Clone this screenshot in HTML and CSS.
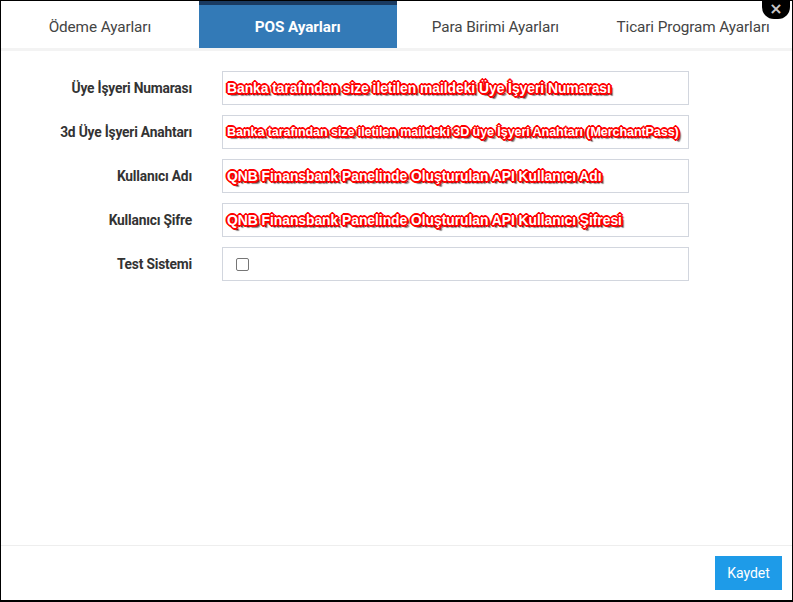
FILE: index.html
```html
<!DOCTYPE html>
<html lang="tr">
<head>
<meta charset="utf-8">
<title>POS Ayarları</title>
<link rel="stylesheet" href="styles.css">
</head>
<body>
<div class="frame">
  <div class="tabs">
    <div class="tab">Ödeme Ayarları</div>
    <div class="tab active">POS Ayarları</div>
    <div class="tab">Para Birimi Ayarları</div>
    <div class="tab">Ticari Program Ayarları</div>
  </div>
  <div class="close">×</div>
  <div class="content">
    <div class="row">
      <div class="label">Üye İşyeri Numarası</div>
      <div class="field"><span class="note">Banka tarafından size iletilen maildeki Üye İşyeri Numarası</span></div>
    </div>
    <div class="row">
      <div class="label">3d Üye İşyeri Anahtarı</div>
      <div class="field"><span class="note small">Banka tarafından size iletilen maildeki 3D üye İşyeri Anahtarı (MerchantPass)</span></div>
    </div>
    <div class="row">
      <div class="label">Kullanıcı Adı</div>
      <div class="field"><span class="note">QNB Finansbank Panelinde Oluşturulan API Kullanıcı Adı</span></div>
    </div>
    <div class="row">
      <div class="label">Kullanıcı Şifre</div>
      <div class="field"><span class="note">QNB Finansbank Panelinde Oluşturulan API Kullanıcı Şifresi</span></div>
    </div>
    <div class="row">
      <div class="label">Test Sistemi</div>
      <div class="field"><span class="check"></span></div>
    </div>
  </div>
  <div class="footer">
    <button class="save">Kaydet</button>
  </div>
</div>
</body>
</html>
```
FILE: styles.css
```css
* { box-sizing: border-box; }
html, body { margin: 0; padding: 0; background: #fff; }
body { font-family: Roboto, "Noto Sans", sans-serif; }
.frame {
  position: relative;
  width: 793px;
  height: 602px;
  border: 1px solid #000;
  border-bottom-width: 2px;
  display: flex;
  flex-direction: column;
  background: #fff;
}
.tabs {
  display: grid;
  grid-template-columns: repeat(4, 1fr);
  height: 50px;
  border-bottom: 3px solid #f3f3f3;
}
.tab {
  display: flex;
  align-items: center;
  justify-content: center;
  font-size: 15.3px;
  color: #444;
  padding-top: 5px;
  letter-spacing: -0.1px;
}
.tab.active {
  background: #337ab7;
  border-top: 4px solid #1a3a60;
  padding-top: 1px;
  color: #fff;
  font-weight: 700;
}
.close {
  position: absolute;
  top: 0;
  right: 2px;
  width: 28px;
  height: 18px;
  background: #000;
  border-radius: 0 0 12px 12px;
  color: #c8c8c8;
  font-weight: 700;
  font-size: 16px;
  line-height: 15px;
  text-align: center;
  font-family: "DejaVu Sans", sans-serif;
}
.content {
  flex: 1;
  padding-top: 20px;
  display: flex;
  flex-direction: column;
  gap: 10px;
}
.row {
  display: flex;
  align-items: center;
  gap: 30px;
}
.label {
  width: 191px;
  text-align: right;
  font-size: 13.8px;
  font-weight: 700;
  color: #333;
  letter-spacing: -0.2px;
}
.field {
  width: 467px;
  height: 34px;
  border: 1px solid #d2d6de;
  display: flex;
  align-items: center;
  padding-left: 4px;
}
.note {
  font-family: "Liberation Sans", Arial, sans-serif;
  font-weight: 700;
  font-size: 13.9px;
  color: #fff;
  white-space: nowrap;
  letter-spacing: -0.05px;
  text-shadow:
    1px 0 0 #f00, -1px 0 0 #f00, 0 1px 0 #f00, 0 -1px 0 #f00,
    1px 1px 0 #f00, -1px -1px 0 #f00, 1px -1px 0 #f00, -1px 1px 0 #f00,
    2px 0 0 #f00, -2px 0 0 #f00, 0 2px 0 #f00, 0 -2px 0 #f00,
    2px 2px 1px #600, 3px 3px 1px rgba(0,0,0,0.45);
}
.note.small { font-size: 12.6px; letter-spacing: -0.1px; }
.check {
  margin-left: 9px;
  width: 13px;
  height: 13px;
  border: 1px solid #767676;
  border-radius: 2px;
  background: #fff;
}
.footer {
  border-top: 1px solid #eee;
  height: 55px;
  display: flex;
  justify-content: flex-end;
  align-items: flex-start;
  padding: 10px 10px 0 0;
}
.save {
  width: 67px;
  height: 34px;
  border: none;
  background: #1e9be8;
  color: #fff;
  font-family: Roboto, "Noto Sans", sans-serif;
  font-size: 14px;
  padding: 0;
}
```
